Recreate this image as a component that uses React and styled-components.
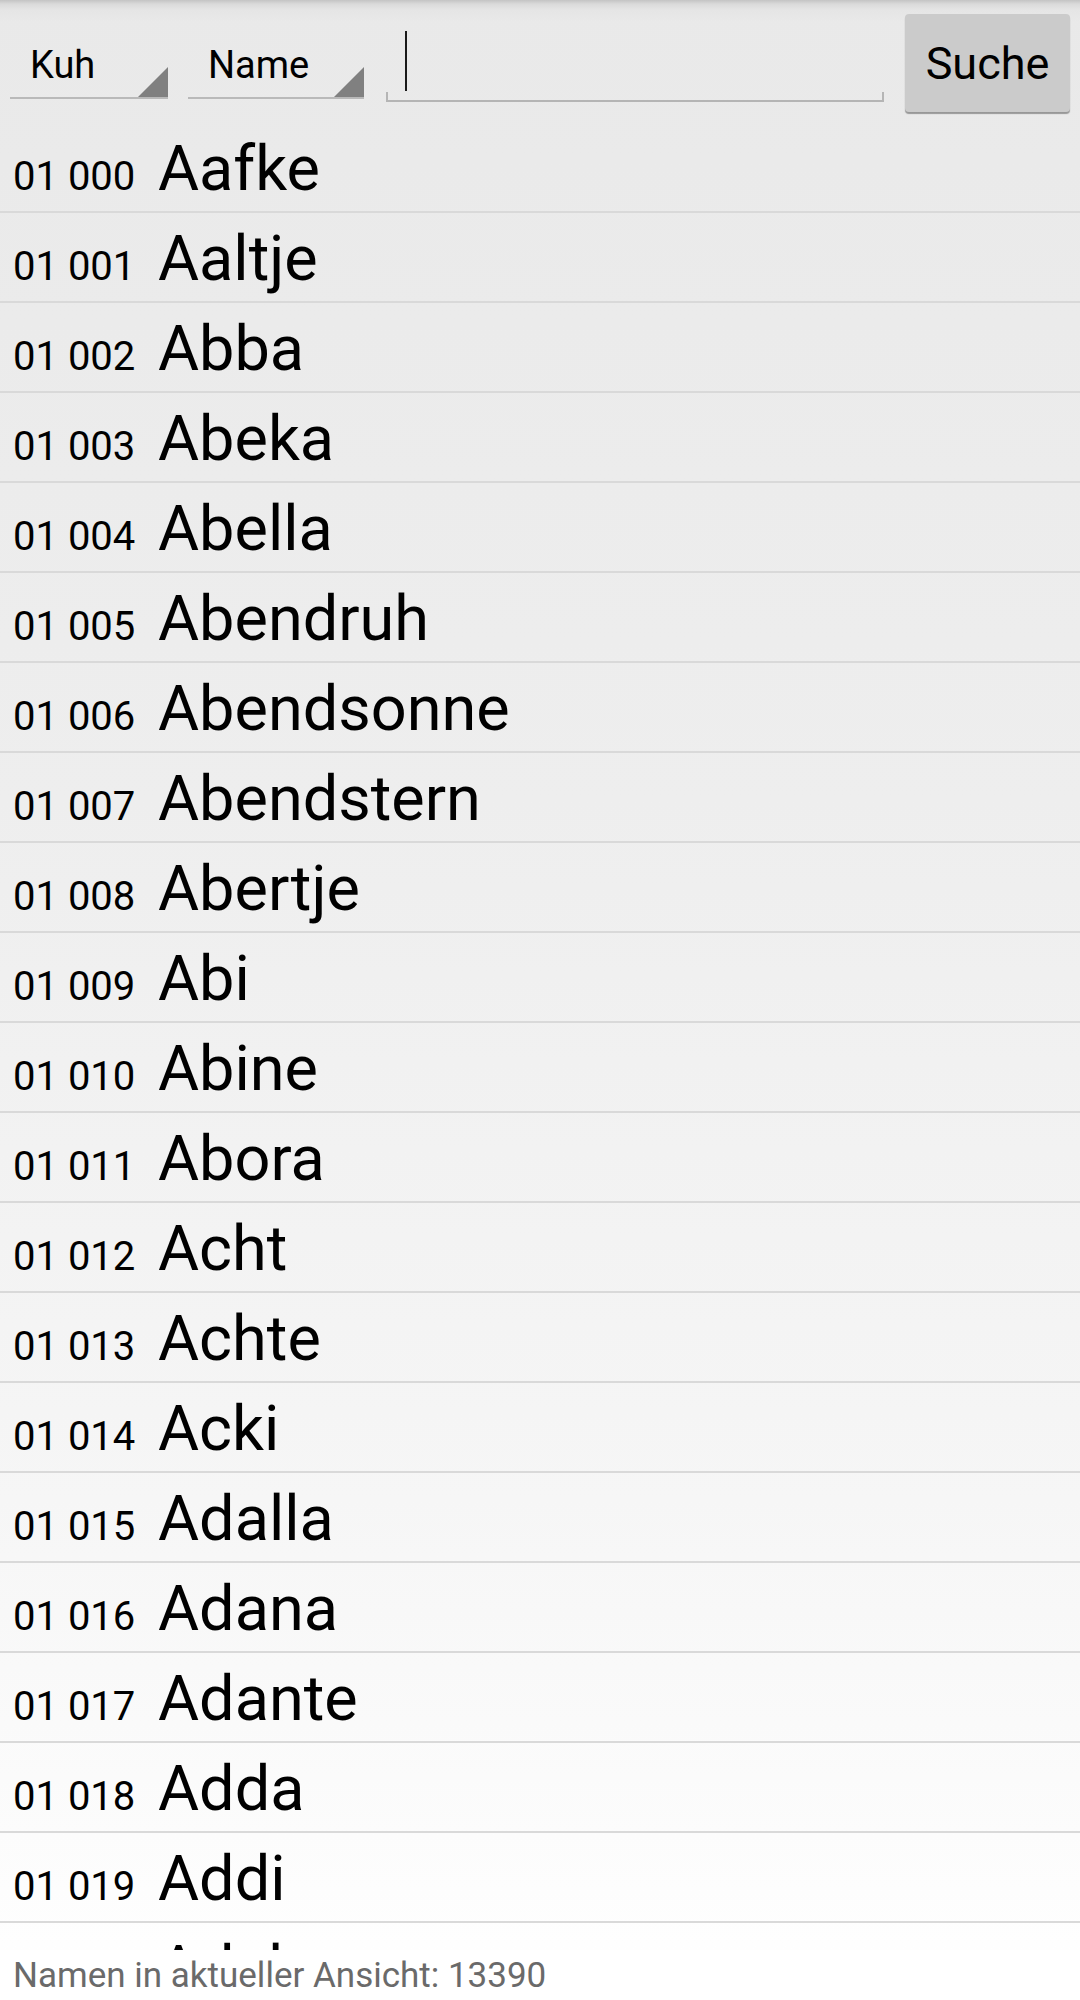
import React from "react";
import styled, { createGlobalStyle } from "styled-components";

const GlobalStyle = createGlobalStyle`
  html, body {
    margin: 0;
    padding: 0;
    background: #ffffff;
  }
  body {
    font-family: Roboto, "Noto Sans", "Liberation Sans", sans-serif;
    color: #000;
  }
`;

const Screen = styled.div`
  width: 1080px;
  height: 2000px;
  display: flex;
  flex-direction: column;
  overflow: hidden;
  background: linear-gradient(to bottom, #e9e9e9 0%, #eeeeee 40%, #f6f6f6 75%, #ffffff 100%);
`;

const Header = styled.div`
  flex: 0 0 123px;
  height: 123px;
  box-sizing: border-box;
  display: flex;
  align-items: flex-start;
  padding: 0 10px;
  background: linear-gradient(to bottom, #c4c4c4 0px, #dadada 4px, #e5e5e5 10px, rgba(233, 233, 233, 0) 22px);
`;

const Spinner = styled.div`
  width: ${(p) => p.$w}px;
  margin-left: ${(p) => p.$ml || 0}px;
  margin-top: 40px;
  height: 59px;
  box-sizing: border-box;
  border-bottom: 2px solid #b9b9b9;
  display: flex;
  justify-content: space-between;
  align-items: flex-start;
  padding-left: ${(p) => p.$pl}px;
`;

const SpinnerLabel = styled.span`
  font-size: 38px;
  line-height: 38px;
  margin-top: 6px;
  color: #000;
`;

const Triangle = styled.span`
  align-self: flex-end;
  width: 30px;
  height: 30px;
  background: #808080;
  clip-path: polygon(100% 0, 100% 100%, 0 100%);
`;

const TextField = styled.div`
  width: 498px;
  margin-left: 22px;
  margin-top: 31px;
  height: 71px;
  box-sizing: border-box;
  border-bottom: 2px solid #b5b5b5;
  background:
    linear-gradient(#b5b5b5, #b5b5b5) left bottom / 2px 8px no-repeat,
    linear-gradient(#b5b5b5, #b5b5b5) right bottom / 2px 8px no-repeat;
  display: flex;
  align-items: flex-start;
`;

const Caret = styled.span`
  width: 2px;
  height: 60px;
  margin-left: 19px;
  background: #1a1a1a;
`;

const SearchButton = styled.button`
  margin-left: 21px;
  margin-top: 14px;
  width: 165px;
  height: 98px;
  border: none;
  border-radius: 4px;
  background: #cbcbcb;
  box-shadow: 0 2px 1px rgba(0, 0, 0, 0.35);
  font-family: Roboto, "Noto Sans", sans-serif;
  font-size: 45px;
  color: #000;
  padding: 0;
  display: flex;
  align-items: center;
  justify-content: center;
`;

const List = styled.div`
  flex: 1 1 auto;
  overflow: hidden;
`;

const Row = styled.div`
  height: 90px;
  box-sizing: border-box;
  border-bottom: 2px solid #d9d9d9;
  display: flex;
  align-items: baseline;
  padding-left: 13px;
  padding-top: 3px;
`;

const Num = styled.span`
  flex: 0 0 145px;
  font-size: 40px;
  line-height: 85px;
  color: #000;
`;

const CowName = styled.span`
  font-size: 63px;
  line-height: 85px;
  color: #000;
`;

const Footer = styled.div`
  flex: 0 0 50px;
  height: 50px;
  box-sizing: border-box;
  padding-left: 13px;
  font-size: 35px;
  line-height: 51px;
  color: #6a6a6a;
  background: #ffffff;
  white-space: nowrap;
`;

const cows = [
  "Aafke",
  "Aaltje",
  "Abba",
  "Abeka",
  "Abella",
  "Abendruh",
  "Abendsonne",
  "Abendstern",
  "Abertje",
  "Abi",
  "Abine",
  "Abora",
  "Acht",
  "Achte",
  "Acki",
  "Adalla",
  "Adana",
  "Adante",
  "Adda",
  "Addi",
  "Adele",
];

const fmt = (i) => "01 " + String(i).padStart(3, "0");

export default function App() {
  return (
    <>
      <GlobalStyle />
      <Screen>
        <Header>
          <Spinner $w={158} $pl={20}>
            <SpinnerLabel>Kuh</SpinnerLabel>
            <Triangle />
          </Spinner>
          <Spinner $w={176} $ml={20} $pl={20}>
            <SpinnerLabel>Name</SpinnerLabel>
            <Triangle />
          </Spinner>
          <TextField>
            <Caret />
          </TextField>
          <SearchButton>Suche</SearchButton>
        </Header>
        <List>
          {cows.map((n, i) => (
            <Row key={n}>
              <Num>{fmt(i)}</Num>
              <CowName>{n}</CowName>
            </Row>
          ))}
        </List>
        <Footer>Namen in aktueller Ansicht: 13390</Footer>
      </Screen>
    </>
  );
}
